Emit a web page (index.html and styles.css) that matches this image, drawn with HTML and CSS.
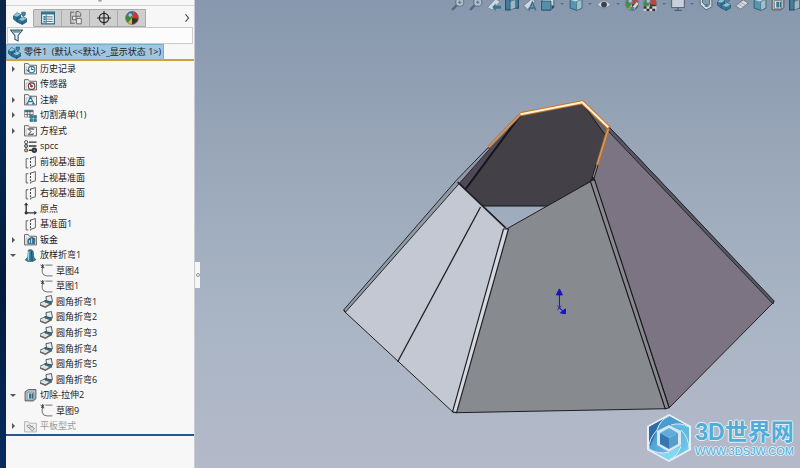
FILE: index.html
```html
<!DOCTYPE html>
<html lang="zh-CN">
<head>
<meta charset="utf-8">
<title>零件1</title>
<link rel="stylesheet" href="styles.css">
</head>
<body>
<svg class="defs" aria-hidden="true">
  <linearGradient id="hexa" x2="1" y2="1"><stop stop-color="#3d85bf"/><stop offset=".5" stop-color="#5baede"/><stop offset="1" stop-color="#79d5f0"/></linearGradient>
  <symbol id="part" viewBox="0 0 24 24"><path d="M1 8l6-5 6 3v6l5-2 5 3v6l-7 4-9-4-6-5z" fill="#2b7598" stroke="#154760" stroke-width="1.3"/><path d="M1 8l6-5 6 3-6 4zM10 14l7-4 6 3-7 4z" fill="#8fc5d9"/><path d="M7 10v8M16 17v6M7 13l5-2" stroke="#153f55" fill="none"/><path d="M15 2h6v5l-3 2-3-2z" fill="#3e89a8" stroke="#154760"/></symbol>
  <symbol id="folder" viewBox="0 0 24 24"><path d="M1 22V3h7l2 3h13v16z" fill="#f5f5f5" stroke="#555" stroke-width="1.6"/><path d="M4 22V9h16" fill="none" stroke="#999"/></symbol>
  <symbol id="history" viewBox="0 0 24 24"><use href="#folder"/><circle cx="14" cy="14" r="6" fill="#eaf5fa" stroke="#377a99" stroke-width="2"/><path d="M14 10v4h4M5 14l3 4 2-4" fill="none" stroke="#24556c" stroke-width="1.7"/></symbol>
  <symbol id="sensor" viewBox="0 0 24 24"><use href="#folder"/><circle cx="14" cy="15" r="6" fill="#fff" stroke="#444" stroke-width="2"/><path d="M14 15l-3-4" stroke="#c62222" stroke-width="2.5"/><circle cx="14" cy="15" r="2.4" fill="#bd2929"/></symbol>
  <symbol id="note" viewBox="0 0 24 24"><use href="#folder"/><path d="M6 20l6-13 6 13M9 16h6M4 20h4M15 20h5" fill="none" stroke="#24769d" stroke-width="2.2"/></symbol>
  <symbol id="cutlist" viewBox="0 0 24 24"><path d="M1 2h16v13H1z" fill="#fff" stroke="#555"/><path d="M1 2h16v4H1z" fill="#397b99"/><path d="M6 2v13M11 2v13M1 10h16" stroke="#555" stroke-width="1.5"/><path d="M11 12h5v5h-5zM18 12h5v5h-5zM18 19h5v4h-5zM11 19h5v4h-5z" fill="#2d85ab" stroke="#1c536c"/></symbol>
  <symbol id="equation" viewBox="0 0 24 24"><use href="#folder"/><path d="M17 11V9H8l5 5-5 5h9v-2" fill="none" stroke="#333" stroke-width="1.7"/></symbol>
  <symbol id="material" viewBox="0 0 24 24"><g stroke="#333" stroke-width="1.5"><path d="M9 4h14M9 11h14M9 19h6" stroke-width="2.5"/><circle cx="4" cy="4" r="3" fill="#eee"/><circle cx="4" cy="11" r="3" fill="#76bdd8"/><circle cx="4" cy="19" r="3" fill="#e1bd36"/><circle cx="19" cy="19" r="3.5" fill="#777" stroke-width="3"/></g></symbol>
  <symbol id="plane" viewBox="0 0 24 24"><path d="M8 5H4v17h4M12 4l9-3v17l-9 3" fill="none" stroke="#555" stroke-width="1.7"/><path d="M12 3v20" stroke="#444" stroke-width="2" stroke-dasharray="4 2"/></symbol>
  <symbol id="origin" viewBox="0 0 24 24"><path d="M4 4v16h16" fill="none" stroke="#333" stroke-width="2.5"/><path d="M0 6l4-5 4 5zM19 16l5 4-5 4z" fill="#333"/><circle cx="4" cy="20" r="3" fill="#333"/></symbol>
  <symbol id="sheet" viewBox="0 0 24 24"><use href="#folder"/><path d="M7 12l7-4 6 2v10H7z" fill="#2c718f" stroke="#194256"/><path d="M10 13v6M14 10v9" stroke="#b7dfef" stroke-width="2"/></symbol>
  <symbol id="loft" viewBox="0 0 24 24"><path d="M8 2l5-1 4 3 1 11 4 5-6 3H7l-5-3 5-5z" fill="#347e9f" stroke="#174558"/><path d="M9 4l-1 17" stroke="#a8d8e8" stroke-width="2"/><path d="M14 4l1 18" stroke="#1b4f66" stroke-width="2"/></symbol>
  <symbol id="sketch" viewBox="0 0 24 24"><path d="M10 2h13M4 9v6q1 7 9 7h10" fill="none" stroke="#666" stroke-width="1.7"/><path d="M1 2l7 5M8 2L2 7M5 0v9" stroke="#222" stroke-width="1.6"/></symbol>
  <symbol id="bend" viewBox="0 0 24 24"><path d="M0 15l11-5 10 5-11 7-10-4z" fill="#e2e2e2" stroke="#444" stroke-width="1.4"/><path d="M11 3l10-2 2 12-11-2z" fill="#e8eef0" stroke="#444" stroke-width="1.6"/><path d="M9 10l12 3v4l-12-4z" fill="#2b718e" stroke="#194b60"/><path d="M0 17l10 4 12-7v3l-12 7-10-4z" fill="#666"/></symbol>
  <symbol id="cut" viewBox="0 0 24 24"><path d="M2 5l6-4h14v17l-5 4H2z" fill="#b8c2c6" stroke="#444" stroke-width="1.5"/><path d="M6 6h12v14H6z" fill="#eef3f4" stroke="#555"/><path d="M9 8h5v10H9z" fill="#24779b"/><path d="M16 8v10" stroke="#1c536b" stroke-width="2"/></symbol>
  <symbol id="flat" viewBox="0 0 24 24"><path d="M1 22V3h7l2 3h13v16z" fill="#eee" stroke="#aaa" stroke-width="1.5"/><path d="M5 11l5-2 10 7-5 4zM10 14l7-3" fill="#ddd" stroke="#999" stroke-width="1.8"/></symbol>
  <symbol id="filter" viewBox="0 0 24 24"><path d="M1 2h22l-8 10v10l-6-3v-7z" fill="#e9f0f2" stroke="#34586a" stroke-width="2"/><path d="M4 3h16l-3 4H7z" fill="#6597aa"/></symbol>
  <symbol id="props" viewBox="0 0 24 24"><path d="M1 2h22v20H1z" fill="#f2f8fa" stroke="#2e6c86" stroke-width="2"/><path d="M1 2h22v4H1z" fill="#2e7594"/><path d="M4 10h4M4 14h4M4 18h4" stroke="#2783a8" stroke-width="3"/><path d="M10 10h10M10 14h10M10 18h10M9 6v15" stroke="#456" stroke-width="1.4"/></symbol>
  <symbol id="config" viewBox="0 0 24 24"><path d="M3 1v21M3 2h6M3 21h7M12 2v7h8V4l-3-3h-5z" fill="none" stroke="#666" stroke-width="1.7"/><path d="M6 9h6v6H6zM13 13h8v9h-8z" fill="#eee" stroke="#666" stroke-width="1.6"/></symbol>
  <symbol id="target" viewBox="0 0 24 24"><circle cx="12" cy="12" r="8" fill="none" stroke="#222" stroke-width="2"/><path d="M12 0v24M0 12h24" stroke="#222" stroke-width="2"/></symbol>
  <symbol id="ball" viewBox="0 0 24 24"><circle cx="12" cy="12" r="11" fill="#e8b923"/><path d="M12 12L3 6Q8-1 15 1z" fill="#386eac"/><path d="M12 12l3-11q8 2 8 12z" fill="#d63526"/><path d="M12 12L3 6Q-1 14 5 20z" fill="#358b48"/><path d="M12 12l11 1q-2 9-11 10z" fill="#333"/><circle cx="12" cy="12" r="11" fill="none" stroke="#555"/><circle cx="9" cy="7" r="3" fill="#fff" opacity=".6"/></symbol>
  <symbol id="lens" viewBox="0 0 24 24"><path d="M2 22l8-8" stroke="#496479" stroke-width="4"/><circle cx="15" cy="9" r="7" fill="#b8c9d5" stroke="#5e7484" stroke-width="2"/><path d="M12 9h6M15 6v6" stroke="#4b6372" stroke-width="1.5"/></symbol>
  <symbol id="prev" viewBox="0 0 24 24"><path d="M1 18L15 3l7 5L9 22z" fill="#dce2e6" stroke="#657480"/><path d="M9 17l6-6v4h9v5h-9v4z" fill="#1f7496"/></symbol>
  <symbol id="section" viewBox="0 0 24 24"><path d="M1 4h8v18H1zM15 4h8v15h-8z" fill="#347d9c" stroke="#1d4759" stroke-width="2"/><path d="M9 8l9-4v15l-9 3z" fill="#a5bdc8" stroke="#37586a"/></symbol>
  <symbol id="dynamic" viewBox="0 0 24 24"><path d="M1 15L15 3l6 4L8 21z" fill="#e0e3e5" stroke="#4a5964"/><path d="M10 23l6-14 6 14M13 19h7" fill="none" stroke="#246c8c" stroke-width="2.5"/></symbol>
  <symbol id="orient" viewBox="0 0 24 24"><path d="M1 7l5-5h16v15l-5 6H1z" fill="#d5e3e8" stroke="#315567" stroke-width="1.5"/><path d="M1 7h16v15H1z" fill="#4690ae" stroke="#214d60" stroke-width="1.5"/><path d="M18 13l5 4-5 4z" fill="#333"/></symbol>
  <symbol id="cube" viewBox="0 0 24 24"><path d="M2 5l9-4 11 3v15l-9 4-11-4z" fill="#4a97b3" stroke="#214d60" stroke-width="1.5"/><path d="M2 5l9-4 11 3-9 4z" fill="#c8e0e9"/><path d="M13 8l9-4v15l-9 4z" fill="#a5c8d6" stroke="#315567"/></symbol>
  <symbol id="eye" viewBox="0 0 24 24"><path d="M1 13Q12 0 23 13 12 25 1 13z" fill="#e1e4e7" stroke="#697580"/><circle cx="12" cy="13" r="5" fill="#333"/></symbol>
  <symbol id="paint" viewBox="0 0 24 24"><use href="#ball"/><path d="M10 20L20 8l4 3-9 12z" fill="#dfe7ea" stroke="#44616e"/><path d="M8 17h8v6H8z" fill="#3d8aa6"/></symbol>
  <symbol id="scene" viewBox="0 0 24 24"><use href="#ball"/><path d="M1 16h22v8H1z" fill="#ddd"/><path d="M1 16h5v4H1zM11 16h5v4h-5zM6 20h5v4H6zM16 20h5v4h-5z" fill="#222"/></symbol>
  <symbol id="screen" viewBox="0 0 24 24"><path d="M1 3h22v15H1z" fill="#d4dae1" stroke="#59636e" stroke-width="2"/><path d="M12 18v4M6 23h12" stroke="#4c5660" stroke-width="2"/></symbol>
  <symbol id="flange" viewBox="0 0 24 24"><path d="M2 3v10l10 9 10-5V5l-4-2v10l-5 3-7-6V5z" fill="#e1e6ea" stroke="#4b5d69" stroke-width="1.5"/><path d="M10 12h6v5h-6z" fill="#3a83a0"/></symbol>
  <symbol id="unfold" viewBox="0 0 24 24"><path d="M1 15L14 5l9 5-13 11z" fill="#e6e4e6" stroke="#626a73" stroke-width="1.5"/><path d="M5 12l9 5M9 9l9 5" stroke="#8b7d85"/></symbol>
</svg>

<main class="app">
  <div class="desktop-edge"></div>
  <aside class="panel">
    <div class="grip"><i></i></div>
    <nav class="tabs">
      <button class="tab active" aria-label="设计树"><svg><use href="#part"/></svg></button>
      <button class="tab" aria-label="属性"><svg><use href="#props"/></svg></button>
      <button class="tab" aria-label="配置"><svg><use href="#config"/></svg></button>
      <button class="tab" aria-label="尺寸"><svg><use href="#target"/></svg></button>
      <button class="tab" aria-label="外观"><svg><use href="#ball"/></svg></button>
      <button class="more" aria-label="更多"><svg viewBox="0 0 8 12"><path d="M2 1l4 5-4 5" fill="none" stroke="#444" stroke-width="1.6"/></svg></button>
    </nav>
    <div class="filter"><label for="filter-box"><svg><use href="#filter"/></svg></label><input id="filter-box" type="text" aria-label="过滤"></div>
    <div class="root"><a href="#"><svg><use href="#part"/></svg>零件1&nbsp; (默认&lt;&lt;默认&gt;_显示状态 1&gt;)</a></div>
    <ul class="tree">
      <li><button class="toggle" aria-label="展开"></button><svg><use href="#history"/></svg><span>历史记录</span></li>
      <li><i class="blank"></i><svg><use href="#sensor"/></svg><span>传感器</span></li>
      <li><button class="toggle" aria-label="展开"></button><svg><use href="#note"/></svg><span>注解</span></li>
      <li><button class="toggle" aria-label="展开"></button><svg><use href="#cutlist"/></svg><span>切割清单(1)</span></li>
      <li><button class="toggle" aria-label="展开"></button><svg><use href="#equation"/></svg><span>方程式</span></li>
      <li><i class="blank"></i><svg><use href="#material"/></svg><span>spcc</span></li>
      <li><i class="blank"></i><svg><use href="#plane"/></svg><span>前视基准面</span></li>
      <li><i class="blank"></i><svg><use href="#plane"/></svg><span>上视基准面</span></li>
      <li><i class="blank"></i><svg><use href="#plane"/></svg><span>右视基准面</span></li>
      <li><i class="blank"></i><svg><use href="#origin"/></svg><span>原点</span></li>
      <li><i class="blank"></i><svg><use href="#plane"/></svg><span>基准面1</span></li>
      <li><button class="toggle" aria-label="展开"></button><svg><use href="#sheet"/></svg><span>钣金</span></li>
      <li><button class="toggle open" aria-label="折叠"></button><svg><use href="#loft"/></svg><span>放样折弯1</span></li>
      <li class="child"><i class="blank"></i><svg><use href="#sketch"/></svg><span>草图4</span></li>
      <li class="child"><i class="blank"></i><svg><use href="#sketch"/></svg><span>草图1</span></li>
      <li class="child"><i class="blank"></i><svg><use href="#bend"/></svg><span>圆角折弯1</span></li>
      <li class="child"><i class="blank"></i><svg><use href="#bend"/></svg><span>圆角折弯2</span></li>
      <li class="child"><i class="blank"></i><svg><use href="#bend"/></svg><span>圆角折弯3</span></li>
      <li class="child"><i class="blank"></i><svg><use href="#bend"/></svg><span>圆角折弯4</span></li>
      <li class="child"><i class="blank"></i><svg><use href="#bend"/></svg><span>圆角折弯5</span></li>
      <li class="child"><i class="blank"></i><svg><use href="#bend"/></svg><span>圆角折弯6</span></li>
      <li><button class="toggle open" aria-label="折叠"></button><svg><use href="#cut"/></svg><span>切除-拉伸2</span></li>
      <li class="child"><i class="blank"></i><svg><use href="#sketch"/></svg><span>草图9</span></li>
      <li class="muted"><button class="toggle" aria-label="展开"></button><svg><use href="#flat"/></svg><span>平板型式</span></li>
    </ul>
  </aside>

  <section class="viewport">
    <svg class="model" viewBox="194 0 606 468" stroke-linejoin="round">
      <path d="M457 181L520 114 582 102 608 128 592 180 548 206 481 206z" fill="#434147" stroke="#17171a"/>
      <path d="M457 181L520 114 465 189z" fill="#51485a" stroke="#202027"/>
      <path d="M520 115L465 189" stroke="#17171c" stroke-width="2"/>
      <path d="M582 103L605 135 608 127z" fill="#68635f" stroke="#17171a"/>
      <path d="M457 182L343 311 453 413 506 228z" fill="#c4c8d2" stroke="#202024"/>
      <path d="M488 147L456 180 343 310 345 312 459 183 489 149z" fill="#8f9aa5" stroke="#25282c"/>
      <path d="M480 207L397 362" stroke="#202024" stroke-width="1.3"/>
      <path d="M506 229L591 181 666 409 455 413z" fill="#878a8f" stroke="#1d1e20"/>
      <path d="M503 229L508 229 456 413 452 412z" fill="#d5d9df" stroke="#202024" stroke-width="1.2"/>
      <path d="M593 179L609 127 774 302 669 408z" fill="#7c7383" stroke="#222027"/>
      <path d="M590 181L594 179 669 408 665 409z" fill="#898990" stroke="#1a1a1c" stroke-width="1.2"/>
      <path d="M609 127L774 301 773 304 608 131z" fill="#565863" stroke="#222329"/>
      <path d="M457 182L505 228" fill="none" stroke="#202024" stroke-width="1.5"/>
      <path d="M592 180L597 164" stroke="#222" stroke-width="3"/><path d="M593 177L597 164" stroke="#9a9aa0"/>
      <path d="M488 147L520 114" stroke="#b77d4c" stroke-width="3"/><path d="M488 147L520 114" stroke="#c8aa96"/>
      <path d="M520 114L582 102 609 128" fill="none" stroke="#c77724" stroke-width="4"/>
      <path d="M608 128L597 165" stroke="#bd7530" stroke-width="3"/>
      <path d="M520 114L582 102 608 127" fill="none" stroke="#fff0dc" stroke-width="2"/>
      <path d="M608 129L597 164" stroke="#c8a78c"/>
      <g stroke="#1712c7" fill="#1712c7"><path d="M559 307V293M559 308l5 4M557 306l4 4M561 306l-4 4"/><path d="M556 295l3-6 3 6zM560 313l5-4v5z"/></g>
    </svg>
    <div class="toolbar">
      <button aria-label="整屏显示"><svg><use href="#lens"/></svg></button>
      <button aria-label="局部放大"><svg><use href="#lens"/></svg></button>
      <button aria-label="上一视图"><svg><use href="#prev"/></svg></button>
      <button aria-label="剖面视图"><svg><use href="#section"/></svg></button>
      <button aria-label="动态注解"><svg><use href="#dynamic"/></svg></button>
      <button aria-label="视图定向"><svg><use href="#orient"/></svg></button><i class="drop"></i>
      <button aria-label="显示样式"><svg><use href="#cube"/></svg></button><i class="drop"></i>
      <button aria-label="隐藏显示"><svg><use href="#eye"/></svg></button><i class="drop"></i>
      <button aria-label="编辑外观"><svg><use href="#paint"/></svg></button>
      <button aria-label="应用布景"><svg><use href="#scene"/></svg></button><i class="drop"></i>
      <button aria-label="视图设定"><svg><use href="#screen"/></svg></button><i class="drop"></i>
      <button aria-label="基体法兰"><svg><use href="#flange"/></svg></button>
      <button aria-label="边线法兰"><svg><use href="#part"/></svg></button>
      <button aria-label="展开"><svg><use href="#unfold"/></svg></button>
      <button aria-label="拉伸"><svg><use href="#cube"/></svg></button>
      <button aria-label="切除"><svg><use href="#cut"/></svg></button>
      <button aria-label="折弯"><svg><use href="#section"/></svg></button>
    </div>
    <button class="splitter" aria-label="收起面板"><i></i></button>
    <div class="watermark">
      <svg viewBox="0 0 46 50"><path d="M23 1L45 13V37L23 49 1 37V13z" fill="#e7f0f8"/><path d="M23 3L43 14V36L23 47 3 36V14z" fill="url(#hexa)"/><path d="M23 3Q12 8 11 17L3 36V14z" fill="#2d6ca8"/><path d="M43 14Q34 9 25 12L11 17Q14 7 23 3z" fill="#4a9bd0"/><path d="M43 36Q42 24 35 17L25 12Q35 9 43 14z" fill="#64b9df"/><path d="M3 36Q13 42 23 39L35 33Q32 43 23 47z" fill="#80d9ef"/><path d="M11 17Q2 27 3 36M11 17Q14 7 23 3M25 12Q34 9 43 14M35 17Q43 25 43 36M35 33Q32 43 23 47M23 39Q13 42 3 36" fill="none" stroke="#d9edf8"/><path d="M23 12L35 18V32L23 39 11 32V18z" fill="#d9e7f1"/><path d="M23 15L32 20 23 25 14 20z" fill="#60addb"/><path d="M14 20L23 25V36L14 31z" fill="#3477b3"/><path d="M32 20L23 25V36L32 31z" fill="#559ece"/></svg>
      <div><strong>3D世界网</strong><small>WWW.3DSJW.COM</small></div>
    </div>
  </section>
</main>
</body>
</html>
```
FILE: styles.css
```css
* { box-sizing: border-box; }
body { margin: 0; font: 9px/12px "Open Sans", "Noto Sans CJK SC", sans-serif; color: #1a1a1a; }
button { border: 0; padding: 0; background: none; }
.defs { position: absolute; width: 0; height: 0; }
.app { display: flex; min-height: 100vh; overflow: hidden; }
.desktop-edge { width: 6px; background: linear-gradient(#0c2548, #062c5c 20%, #031b3e 60%, #082b5e); }
.panel { width: 189px; flex: none; display: flex; flex-direction: column; background: #f7f7f8; border-right: 1px solid #c9ccd2; }
.grip { height: 6px; border-bottom: 1px solid #d4d5d8; display: flex; justify-content: center; }
.grip i { width: 4px; height: 2px; background: #aaa; border-radius: 0 0 2px 2px; }
.tabs { display: flex; height: 21px; padding-top: 3px; }
.tab { width: 28px; background: #cecece; border: solid #aaa; border-width: 1px 1px 1px 0; display: grid; place-items: center; }
.tab.active { background: #f7f7f8; border-color: #f7f7f8 #aaa #f7f7f8 #f7f7f8; }
.tab svg { width: 14px; height: 14px; }
.more { margin-left: auto; width: 14px; display: grid; place-items: center; }
.more svg { width: 6px; height: 10px; }
.filter { display: flex; align-items: center; height: 17px; margin: 0 1px; border: 1px solid #cacbce; padding-left: 2px; background: #fcfcfc; }
.filter label { display: flex; }
.filter svg { width: 13px; height: 13px; }
.filter input { flex: 1; min-width: 0; border: 0; outline: 0; background: none; font: inherit; }
.root { height: 17px; border-bottom: 2px solid #c8a341; display: flex; }
.root a { display: flex; align-items: center; gap: 3px; padding: 0 2px 0 1px; background: #9fc5e2; border: 1px solid #7eaccb; border-bottom: 0; color: inherit; text-decoration: none; white-space: nowrap; }
.root svg { width: 13px; height: 13px; }
.tree { list-style: none; margin: 0; padding: 0; min-height: 375px; display: grid; grid-auto-rows: 1fr; border-bottom: 2px solid #2b5791; }
.tree li { display: flex; align-items: center; padding-left: 2px; white-space: nowrap; }
.tree li.child { padding-left: 18px; }
.tree svg { width: 13px; height: 13px; margin: 0 3px 0 6px; }
.toggle, .blank { width: 10px; height: 10px; display: grid; place-items: center; }
.toggle::before { content: ""; border: solid transparent; border-width: 3px 0 3px 3px; border-left-color: #555; }
.toggle.open::before { border-width: 3px 3px 0; border-color: #555 transparent transparent; }
.muted span { color: #9a9a9a; }
.viewport { flex: 1; min-width: 0; position: relative; overflow: hidden; background: linear-gradient(#8797ad, #9ca9ba 38%, #a9b5c4 68%, #b4b9c9); }
.model { display: block; width: 100%; height: 100%; fill: none; }
.toolbar { position: absolute; top: -3px; left: 256px; right: 0; display: flex; align-items: center; gap: 4px; overflow: hidden; opacity: .85; }
.toolbar button { flex: none; display: flex; }
.toolbar svg { width: 14px; height: 14px; }
.drop { flex: none; width: 6px; display: grid; place-items: center; }
.drop::before { content: ""; border: solid transparent; border-width: 2px 2px 0; border-top-color: #56657a; }
.splitter { position: absolute; left: 0; top: 262px; width: 5px; height: 26px; background: #f5f5f6; display: grid; place-items: center; }
.splitter i { width: 4px; height: 4px; border: 1px solid #999; border-radius: 50%; }
.watermark { position: absolute; right: 6px; bottom: 5px; display: flex; align-items: center; gap: 3px; }
.watermark svg { width: 46px; height: 50px; }
.watermark div { display: grid; justify-items: center; color: #4fadd8; text-shadow: 1px 0 #e3eff7, -1px 0 #e3eff7, 0 1px #e3eff7, 0 -1px #e3eff7; }
.watermark strong { font: bold 23px/24px "Liberation Sans", "Noto Sans CJK SC", sans-serif; }
.watermark small { margin-top: 2px; font: 10px/10px "Liberation Sans", sans-serif; font-size: 11px; }
```
